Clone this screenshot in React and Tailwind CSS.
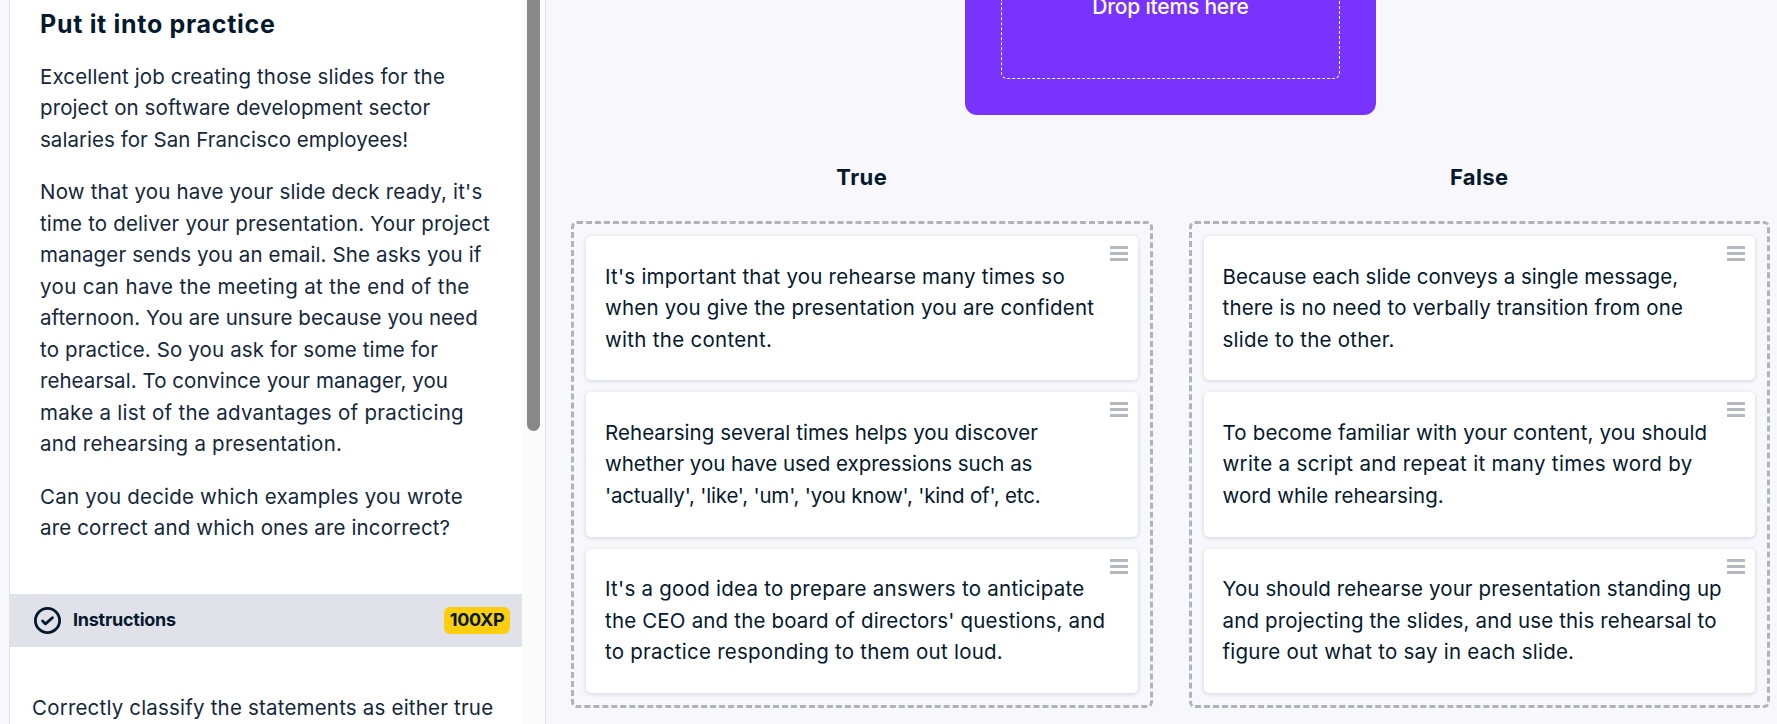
const intro = [
  [
    ["Excellent job creating those slides for the", "tracking-[0.147px]"],
    ["project on software development sector", "tracking-[0.101px]"],
    ["salaries for San Francisco employees!", "tracking-[0.037px]"],
  ],
  [
    ["Now that you have your slide deck ready, it's", "tracking-[0.185px]"],
    ["time to deliver your presentation. Your project", "tracking-[0.157px]"],
    ["manager sends you an email. She asks you if", "tracking-[0.133px]"],
    ["you can have the meeting at the end of the", "tracking-[0.358px]"],
    ["afternoon. You are unsure because you need", "tracking-[0.060px]"],
    ["to practice. So you ask for some time for", "tracking-[0.130px]"],
    ["rehearsal. To convince your manager, you", "tracking-[0.058px]"],
    ["make a list of the advantages of practicing", "tracking-[0.289px]"],
    ["and rehearsing a presentation.", "tracking-[0.225px]"],
  ],
  [
    ["Can you decide which examples you wrote", "tracking-[0.200px]"],
    ["are correct and which ones are incorrect?", "tracking-[0.140px]"],
  ],
];

const columns = [
  {
    title: "True",
    cards: [
      [
        ["It's important that you rehearse many times so", "tracking-[0.231px]"],
        ["when you give the presentation you are confident", "tracking-[0.195px]"],
        ["with the content.", "tracking-[0.290px]"],
      ],
      [
        ["Rehearsing several times helps you discover", "tracking-[0.060px]"],
        ["whether you have used expressions such as", "tracking-[-0.035px]"],
        ["'actually', 'like', 'um', 'you know', 'kind of', etc.", "tracking-[-0.180px]"],
      ],
      [
        ["It's a good idea to prepare answers to anticipate", "tracking-[0.253px]"],
        ["the CEO and the board of directors' questions, and", "tracking-[0.170px]"],
        ["to practice responding to them out loud.", "tracking-[0.250px]"],
      ],
    ],
  },
  {
    title: "False",
    cards: [
      [
        ["Because each slide conveys a single message,", "tracking-[0.030px]"],
        ["there is no need to verbally transition from one", "tracking-[0.178px]"],
        ["slide to the other.", "tracking-[0.240px]"],
      ],
      [
        ["To become familiar with your content, you should", "tracking-[0.160px]"],
        ["write a script and repeat it many times word by", "tracking-[0.340px]"],
        ["word while rehearsing.", "tracking-[0.050px]"],
      ],
      [
        ["You should rehearse your presentation standing up", "tracking-[0.100px]"],
        ["and projecting the slides, and use this rehearsal to", "tracking-[0.140px]"],
        ["figure out what to say in each slide.", "tracking-[0.229px]"],
      ],
    ],
  },
];

function Lines({ lines }) {
  return (
    <p>
      {lines.map(([text, tracking]) => (
        <span key={text} className={`block whitespace-nowrap ${tracking}`}>
          {text}
        </span>
      ))}
    </p>
  );
}

function DragHandle() {
  return (
    <svg className="absolute top-2.5 right-2.5 h-[15px] w-[18px] text-[#b7b8bf]" viewBox="0 0 18 15" fill="currentColor">
      <rect width="18" height="3" rx="0.5" />
      <rect y="6" width="18" height="3" rx="0.5" />
      <rect y="12" width="18" height="3" rx="0.5" />
    </svg>
  );
}

function Column({ title, cards }) {
  return (
    <section className="min-w-0 flex-1">
      <h2 className="text-center text-[22px] leading-[33px] font-bold tracking-[0.4px]">{title}</h2>
      <div className="mt-[27px] flex flex-col gap-3 rounded-md border-[3px] border-dashed border-[#b0b3bb] p-3">
        {cards.map((lines, i) => (
          <article
            key={i}
            className="relative rounded-[5px] bg-white pt-[24.5px] pr-5 pb-[25.25px] pl-[19px] shadow-[0_1px_4px_rgba(5,25,45,0.16)]"
          >
            <DragHandle />
            <Lines lines={lines} />
          </article>
        ))}
      </div>
    </section>
  );
}

export default function App() {
  return (
    <div className="flex h-[724px] w-[1777px] overflow-hidden bg-[#f7f7fc] pl-[9px] font-['Inter',sans-serif] text-[20.5px] leading-[31.5px] text-[#05192d]">
      <aside className="flex w-[537px] shrink-0 border-x border-[#e1e1e8] bg-white">
        <div className="w-[512px] shrink-0 pt-[9px] text-[#14273a]">
          <div className="flex flex-col gap-[21px] pl-[30px]">
            <h1 className="-mb-px text-[25px] font-bold tracking-[0.7px] whitespace-nowrap text-[#05192d]">
              Put it into practice
            </h1>
            {intro.map((lines, i) => (
              <Lines key={i} lines={lines} />
            ))}
          </div>
          <div className="mt-[50px] flex h-[53px] items-center justify-between bg-[#e1e1ea] pr-3 pl-6 text-lg font-bold text-[#05192d]">
            <div className="flex items-center gap-3">
              <svg className="size-[27px]" viewBox="0 0 27 27" fill="none" stroke="currentColor" strokeWidth="2.8">
                <circle cx="13.5" cy="13.5" r="12.1" />
                <path d="M8.6 14 11.5 16.9 18.4 10.7" strokeLinecap="round" strokeLinejoin="round" />
              </svg>
              <span className="tracking-[-0.25px]">Instructions</span>
            </div>
            <span className="flex h-[27px] w-[66px] items-center justify-center rounded-md bg-[#fcce0d] tracking-[-0.4px]">
              100XP
            </span>
          </div>
          <div className="pt-[45px] pl-[22px]">
            <p className="tracking-[0.191px] whitespace-nowrap">Correctly classify the statements as either true</p>
          </div>
        </div>
        <div className="flex flex-1 justify-center bg-[#fbfbfb]">
          <div className="h-[431px] w-[13px] rounded-b-full bg-[#888888]" />
        </div>
      </aside>

      <main className="flex min-w-0 flex-1 flex-col pr-[7px] pl-[25px]">
        <div className="flex h-[115px] w-[411px] shrink-0 self-center rounded-b-xl bg-[#7933ff] px-9 pb-9">
          <div className="flex flex-1 flex-col rounded-b-md border border-t-0 border-dashed border-white text-center text-white">
            <span className="-mt-[9px] text-[21px] font-medium tracking-[-0.2px]">Drop items here</span>
          </div>
        </div>
        <div className="flex gap-9 pt-[46px]">
          {columns.map((column) => (
            <Column key={column.title} {...column} />
          ))}
        </div>
      </main>
    </div>
  );
}
